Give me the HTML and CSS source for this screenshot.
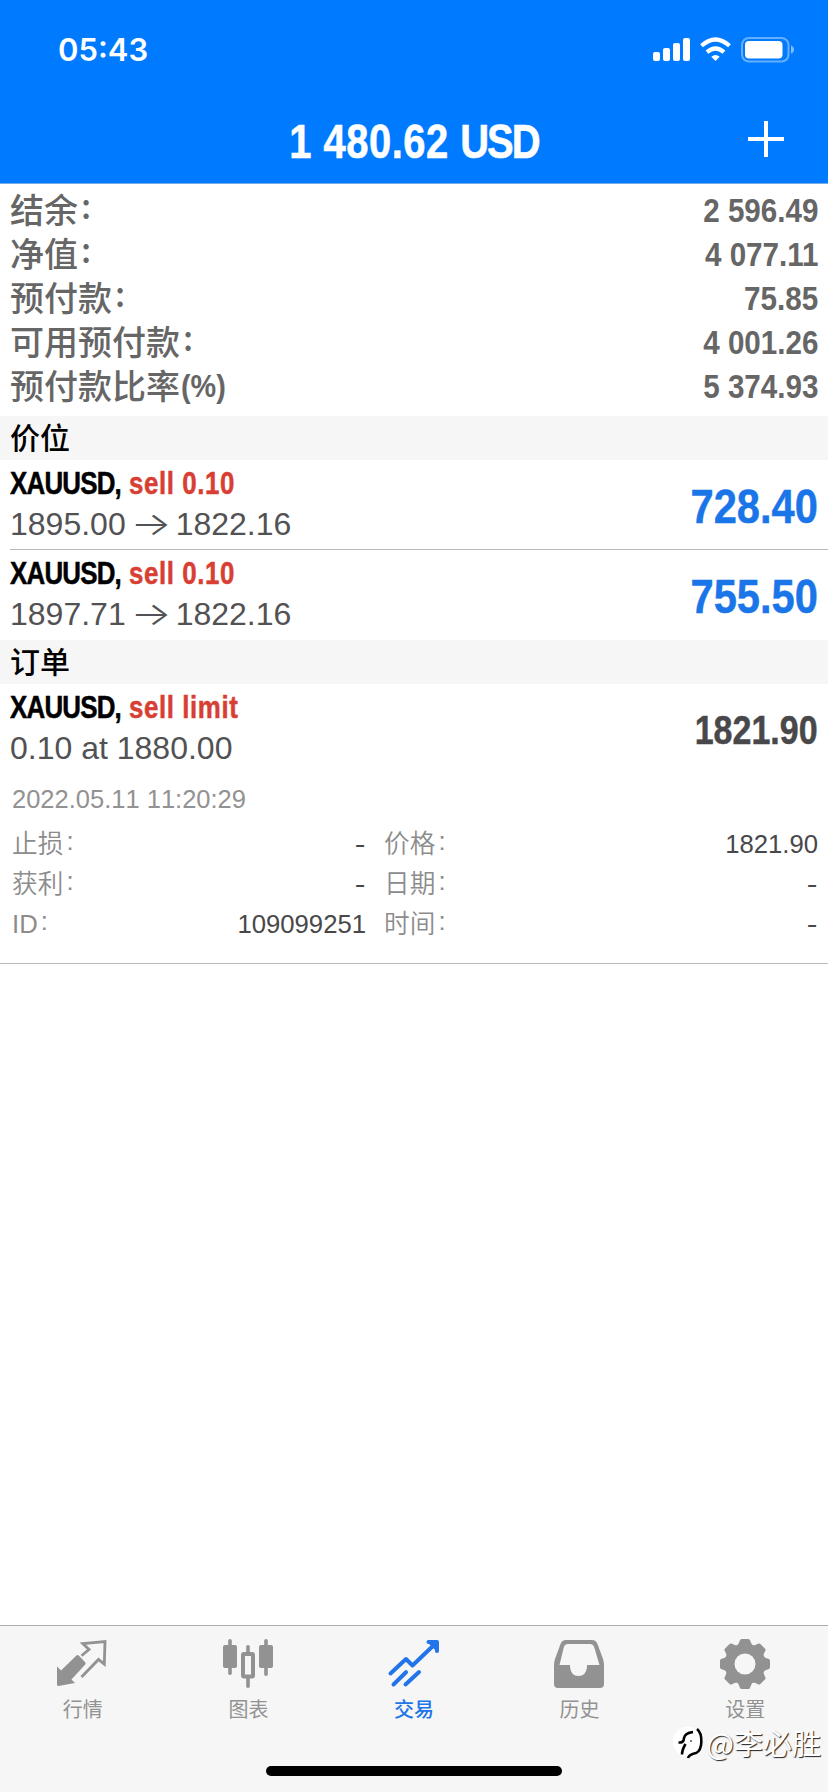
FILE: index.html
```html
<!DOCTYPE html>
<html lang="zh-CN">
<head>
<meta charset="utf-8">
<title>交易</title>
<link rel="stylesheet" href="styles.css">
</head>
<body>
<div class="app">
  <header class="header">
    <div class="status">
      <span class="time">05:43</span>
      <svg class="status-icons" width="144" height="28" viewBox="0 0 144 28">
        <g fill="#fff">
          <rect x="1" y="16" width="7" height="9" rx="2"/>
          <rect x="11" y="12" width="7" height="13" rx="2"/>
          <rect x="21" y="7" width="7" height="18" rx="2"/>
          <rect x="31" y="2" width="7" height="23" rx="2"/>
          <path d="M63.500 25L59.300 20.800Q63.500 17.400 67.700 20.800Z"/>
        </g>
        <g fill="none" stroke="#fff" stroke-width="4.200">
          <path d="M49.500 9.800Q63.500-2.800 77.500 9.800"/>
          <path d="M55 16.200Q63.500 8.800 72 16.200"/>
        </g>
        <rect x="90" y="2" width="46.500" height="23.500" rx="7" fill="none" stroke="#fff" stroke-opacity=".4" stroke-width="2"/>
        <rect x="93" y="5" width="37.500" height="17.500" rx="4" fill="#fff"/>
        <path d="M139 9.500q3 1 3 4t-3 4z" fill="#fff" fill-opacity=".5"/>
      </svg>
    </div>
    <div class="titlebar">
      <h1 class="title">1 480.62 <span class="currency">USD</span></h1>
      <svg class="plus" width="36" height="36" viewBox="0 0 36 36"><path d="M18 0v36M0 18h36" stroke="#fff" stroke-width="4"/></svg>
    </div>
  </header>

  <main class="content">
    <dl class="summary">
      <div class="sum-row"><dt>结余<i>:</i></dt><dd>2 596.49</dd></div>
      <div class="sum-row"><dt>净值<i>:</i></dt><dd>4 077.11</dd></div>
      <div class="sum-row"><dt>预付款<i>:</i></dt><dd>75.85</dd></div>
      <div class="sum-row"><dt>可用预付款<i>:</i></dt><dd>4 001.26</dd></div>
      <div class="sum-row"><dt>预付款比率<b>(%)</b></dt><dd>5 374.93</dd></div>
    </dl>

    <h2 class="section">价位</h2>
    <div class="position">
      <div>
        <div class="symbol">XAUUSD, <span class="sell">sell 0.10</span></div>
        <div class="prices">1895.00<span class="arrow">→</span>1822.16</div>
      </div>
      <div class="profit">728.40</div>
    </div>
    <div class="divider"></div>
    <div class="position last">
      <div>
        <div class="symbol">XAUUSD, <span class="sell">sell 0.10</span></div>
        <div class="prices">1897.71<span class="arrow">→</span>1822.16</div>
      </div>
      <div class="profit">755.50</div>
    </div>

    <h2 class="section">订单</h2>
    <div class="order">
      <div class="position">
        <div>
          <div class="symbol">XAUUSD, <span class="sell">sell limit</span></div>
          <div class="prices">0.10 at 1880.00</div>
        </div>
        <div class="quote">1821.90</div>
      </div>
      <div class="date">2022.05.11 11:20:29</div>
      <dl class="details">
        <div class="detail"><dt>止损<i>:</i></dt><dd class="none">-</dd></div>
        <div class="detail"><dt>价格<i>:</i></dt><dd>1821.90</dd></div>
        <div class="detail"><dt>获利<i>:</i></dt><dd class="none">-</dd></div>
        <div class="detail"><dt>日期<i>:</i></dt><dd class="none">-</dd></div>
        <div class="detail"><dt>ID<i>:</i></dt><dd>109099251</dd></div>
        <div class="detail"><dt>时间<i>:</i></dt><dd class="none">-</dd></div>
      </dl>
    </div>
  </main>

  <nav class="tabs">
    <a class="tab">
      <svg width="52" height="52" viewBox="0 0 52 52">
        <path fill="#929292" d="M20.500 18.500q1.200-.800 2.200 0l6.500 6.800q.8 1.200 0 2.200L15.500 42.500l3.500 3.500L2.500 49Q1 49 1 47.500V29.500l4 4z"/>
        <path fill="none" stroke="#929292" stroke-width="2.800" d="M25.500 18.800L33 12.500L26.800 6.500L49 4.500L48.300 27.200L42.500 22.500L25.500 40"/>
      </svg>
      <span>行情</span>
    </a>
    <a class="tab">
      <svg width="52" height="52" viewBox="0 0 52 52">
        <g fill="#929292">
          <rect x="6.200" y="2" width="3.600" height="36" rx="1.800"/><rect x="1" y="8" width="14" height="23" rx="2"/>
          <rect x="42.200" y="2" width="3.600" height="37" rx="1.800"/><rect x="37" y="8" width="14" height="23" rx="2"/>
          <rect x="24.200" y="8" width="3.600" height="9" rx="1.800"/><rect x="24.200" y="38" width="3.600" height="13" rx="1.800"/>
        </g>
        <rect x="21" y="17" width="10" height="22.500" rx="1" fill="none" stroke="#929292" stroke-width="4"/>
      </svg>
      <span>图表</span>
    </a>
    <a class="tab active">
      <svg width="52" height="52" viewBox="0 0 52 52" fill="none" stroke="#2175e8" stroke-width="4" stroke-linecap="round" stroke-linejoin="round">
        <path d="M3.500 36.500L19 22L25.500 28.500L48.500 6.500M6.500 47.500L19 35.200M18.500 47.500L32 35"/>
        <path d="M41.500 5H50V14M44 6L49 11"/>
      </svg>
      <span>交易</span>
    </a>
    <a class="tab">
      <svg width="52" height="52" viewBox="0 0 52 52">
        <path fill="#929292" fill-rule="evenodd" d="M13 3H39Q43 3 44.500 7L50 22Q51 25 51 28V47Q51 51 47 51H5Q1 51 1 47V28Q1 25 2 22L7.500 7Q9 3 13 3ZM14.500 7Q12 7 11 9.500L6.500 28H17V30Q18 39 25.500 39T34 30V28H46.500L41 9.500Q40 7 37.500 7Z"/>
      </svg>
      <span>历史</span>
    </a>
    <a class="tab">
      <svg width="52" height="52" viewBox="0 0 52 52">
        <g transform="translate(26 27)" fill="#929292">
          <circle r="20"/>
          <path id="teeth" stroke="#929292" stroke-width="4" stroke-linejoin="round" d="M-7-16.500Q-4-19-3.200-23H3.200Q4-19 7-16.500V16.500Q4 19 3.200 23H-3.200Q-4 19-7 16.500Z"/>
          <use href="#teeth" transform="rotate(45)"/>
          <use href="#teeth" transform="rotate(90)"/>
          <use href="#teeth" transform="rotate(135)"/>
          <circle r="10.500" fill="#f6f6f6"/>
        </g>
      </svg>
      <span>设置</span>
    </a>
    <div class="home-bar"></div>
    <div class="watermark">
      <svg width="36" height="36" viewBox="0 0 36 36" fill="none">
        <path d="M2 17Q1 10 6 5Q12 0 20 1Q29 2 32 10Q33 22 27 28Q18 33 9 29Q3 25 2 17Z" fill="#fff"/>
        <path d="M11 28.500Q11 24 14.500 18M7.500 16.500Q13 17 13 12Q14 7 22 6" stroke="#000" stroke-width="2.600"/>
        <path d="M26 3C32 8 32 24 25 27Q18 28.500 17 32" stroke="#000" stroke-width="2.600"/>
        <circle cx="20" cy="15" r="1" fill="#555"/>
      </svg>
      <span>@李必胜</span>
    </div>
  </nav>
</div>
</body>
</html>
```
FILE: styles.css
```css
* { box-sizing: border-box; }
body, h1, h2, dl, dd { margin: 0; }
body {
  background: #fff;
  font-family: "Liberation Sans", "Noto Sans CJK SC", sans-serif;
  font-kerning: none;
}
i, b { font-style: normal; font-weight: inherit; }
.app {
  width: 828px;
  height: 1792px;
  display: flex;
  flex-direction: column;
  overflow: hidden;
}

/* Header */
.header {
  height: 184px;
  background: #007aff;
  border-bottom: 1px solid #78abea;
  color: #fff;
}
.status {
  height: 100px;
  padding: 0 32px 0 58px;
  display: flex;
  align-items: center;
  justify-content: space-between;
}
.time {
  font: 600 31px/36px Inter, sans-serif;
}
.titlebar {
  height: 81px;
  padding-right: 44px;
  display: grid;
  grid-template-columns: 1fr auto 1fr;
  align-items: center;
}
.title {
  grid-column: 2;
  margin-left: 43px;
  font-size: 49px;
  line-height: 56px;
  letter-spacing: .6px;
  white-space: pre;
  transform: scaleX(.815);
  -webkit-text-stroke: .6px;
}
.currency { letter-spacing: -2.500px; }
.plus { justify-self: end; margin-top: -3px; }

/* Account summary */
.summary { height: 232px; padding: 4px 10px 0; color: #666; }
.sum-row {
  height: 44px;
  display: flex;
  justify-content: space-between;
  align-items: center;
}
.sum-row dt {
  margin-top: -3px;
  font: 500 34px/44px "Noto Sans CJK SC", sans-serif;
}
.sum-row dt i { vertical-align: 4px; margin-left: 3px; line-height: 0; }
.sum-row dt b {
  display: inline-block;
  vertical-align: 2px;
  margin-left: 1px;
  font: bold 32px/32px "Liberation Sans", sans-serif;
  transform: scaleX(.9);
  transform-origin: left;
}
.sum-row dd {
  font: bold 34px/44px "Liberation Sans", sans-serif;
  transform: scaleX(.87);
  transform-origin: right;
}

.section {
  height: 44px;
  padding-left: 10px;
  background: #f6f6f6;
  font: 500 30px/41px "Noto Sans CJK SC", sans-serif;
  color: #000;
}

/* Positions and orders */
.position {
  height: 89px;
  padding: 3px 10px 0;
  display: flex;
  justify-content: space-between;
}
.last { height: 90px; }
.divider { height: 1px; margin-left: 10px; background: #b9b9bb; }
.symbol {
  font-size: 32px;
  line-height: 40px;
  font-weight: bold;
  letter-spacing: -1px;
  white-space: nowrap;
  transform: scaleX(.81);
  transform-origin: left;
  -webkit-text-stroke: .5px;
}
.sell { margin-left: 2px; color: #d83f34; letter-spacing: .7px; }
.prices {
  font-size: 32px;
  line-height: 42px;
  color: #525254;
  white-space: nowrap;
}
.arrow {
  display: inline-block;
  width: 50px;
  text-align: center;
  font-family: Inter, sans-serif;
  font-weight: 300;
  transform: scaleX(1.35);
}
.profit, .quote {
  font-weight: bold;
  line-height: 87px;
  transform: scaleX(.85);
  transform-origin: right;
  -webkit-text-stroke: .5px;
}
.profit { font-size: 49px; color: #1a75e8; }
.quote { font-size: 40px; line-height: 86px; color: #48484a; }
.order { height: 280px; border-bottom: 1px solid #bcbcbc; }
.date {
  padding: 10px 12px 0;
  font-size: 25.500px;
  line-height: 32px;
  color: #929292;
}
.details {
  margin-top: 9px;
  padding: 0 10px 0 12px;
  display: grid;
  grid-template-columns: 354px 1fr;
  column-gap: 18px;
}
.detail {
  height: 40px;
  display: flex;
  justify-content: space-between;
  align-items: center;
  font-size: 25.700px;
  line-height: 40px;
}
.detail dt {
  font-family: "Liberation Sans", "Noto Sans CJK SC", sans-serif;
  font-weight: 350;
  color: #8c8c8c;
}
.detail dt i { vertical-align: 3px; margin-left: 3px; line-height: 0; }
.detail dd { color: #48484a; }
.detail .none { transform: scaleX(1.25); transform-origin: right; }

/* Tab bar */
.tabs {
  position: relative;
  margin-top: auto;
  height: 167px;
  padding-top: 11px;
  display: grid;
  grid-template-columns: repeat(5, 1fr);
  background: #f6f6f6;
  border-top: 1px solid #adadad;
}
.tab {
  display: flex;
  flex-direction: column;
  align-items: center;
  color: #929292;
  font: 400 20px/28px "Noto Sans CJK SC", sans-serif;
}
.tab svg { display: block; margin: 0 1px 6px 0; }
.active { color: #2175e8; font-weight: 500; }
.home-bar {
  position: absolute;
  left: 266px;
  bottom: 16px;
  width: 296px;
  height: 10px;
  border-radius: 5px;
  background: #000;
}
.watermark {
  position: absolute;
  right: 7px;
  bottom: 30px;
  display: flex;
  align-items: center;
  color: #fff;
  font: 400 29px/40px "Noto Sans CJK SC", sans-serif;
  text-shadow: 1px 1px 1px #222;
}
.watermark span { margin-top: -5px; }
```
